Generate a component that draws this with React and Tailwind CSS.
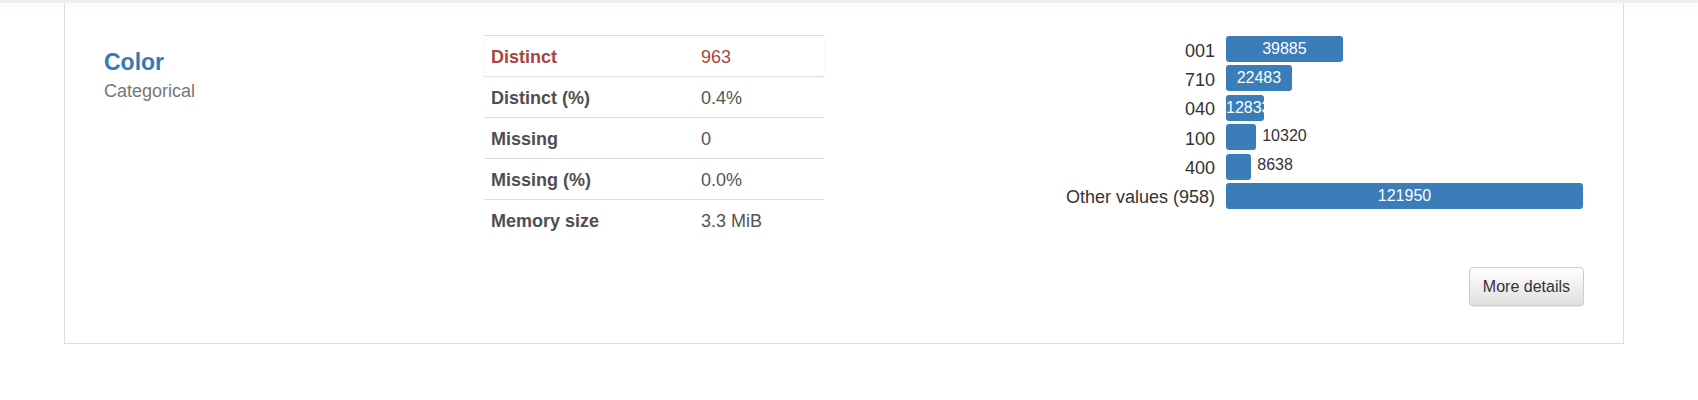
const STATS = [
  { label: 'Distinct', value: '963', alert: true },
  { label: 'Distinct (%)', value: '0.4%' },
  { label: 'Missing', value: '0' },
  { label: 'Missing (%)', value: '0.0%' },
  { label: 'Memory size', value: '3.3 MiB' },
]

const FREQ = [
  { label: '001', count: 39885 },
  { label: '710', count: 22483 },
  { label: '040', count: 12833 },
  { label: '100', count: 10320, outside: true },
  { label: '400', count: 8638, outside: true },
  { label: 'Other values (958)', count: 121950 },
]

const MAX = 121950
const BAR_MAX = 357

function StatsTable() {
  return (
    <div className="w-[340px]">
      {STATS.map(({ label, value, alert }, i) => (
        <div
          key={label}
          className={`flex h-[41px] items-center pt-[1px] border-t border-[#dddddd] text-[18px] leading-[22px] ${
            alert ? 'text-[#a94442] rounded-b-[4px] shadow-[0_1px_3px_rgba(0,0,0,0.08)]' : 'text-[#4f4f4f]'
          } ${i === 1 ? 'border-t-[#e2e2e2]' : ''}`}
        >
          <div className="w-[217px] pl-[7px] font-bold">{label}</div>
          <div className={alert ? '' : 'text-[#555555]'}>{value}</div>
        </div>
      ))}
    </div>
  )
}

function FreqChart() {
  return (
    <div className="-mt-[0.7px]">
      {FREQ.map(({ label, count, outside }) => {
        const w = (count / MAX) * BAR_MAX
        return (
          <div key={label} className="flex h-[29.4px] items-center">
            <div className="w-[391px] pt-[3px] text-right text-[18px] leading-[20px] text-[#333333]">{label}</div>
            <div className="ml-[11px] flex items-center">
              <div
                className="h-[26px] overflow-hidden whitespace-nowrap rounded-[3px] bg-[#3a7db8] text-center text-[16px] leading-[26px] text-white"
                style={{ width: w }}
              >
                {outside ? '' : count}
              </div>
              {outside && (
                <span className="ml-[6px] -mt-[3px] text-[16px] leading-[20px] text-[#333333]">{count}</span>
              )}
            </div>
          </div>
        )
      })}
    </div>
  )
}

export default function App() {
  return (
    <div className="min-h-[400px] bg-white font-['Liberation_Sans',Arial,sans-serif]">
      <div className="relative z-10 h-[3px] bg-[#efefef] shadow-[0_3px_8px_rgba(0,0,0,0.06)]" />
      <div className="ml-[64px] w-[1560px] border-x border-b border-[#dedede] px-[39px] pt-[32px] pb-[37px]">
        <div className="grid grid-cols-[380px_340px_1fr] items-start">
          <div className="pt-[14px]">
            <h2 className="text-[23px] leading-[26px] font-bold text-[#337ab7]">Color</h2>
            <p className="mt-[5px] text-[18px] leading-[22px] text-[#777777]">Categorical</p>
          </div>
          <StatsTable />
          <FreqChart />
        </div>
        <div className="mt-[27px] flex justify-end">
          <button className="h-[39px] rounded-[4px] border border-[#cccccc] bg-gradient-to-b from-white to-[#e0e0e0] px-[13px] text-[16px] text-[#333333] shadow-[inset_0_1px_0_rgba(255,255,255,0.15),0_1px_1px_rgba(0,0,0,0.075)]">
            More details
          </button>
        </div>
      </div>
    </div>
  )
}
